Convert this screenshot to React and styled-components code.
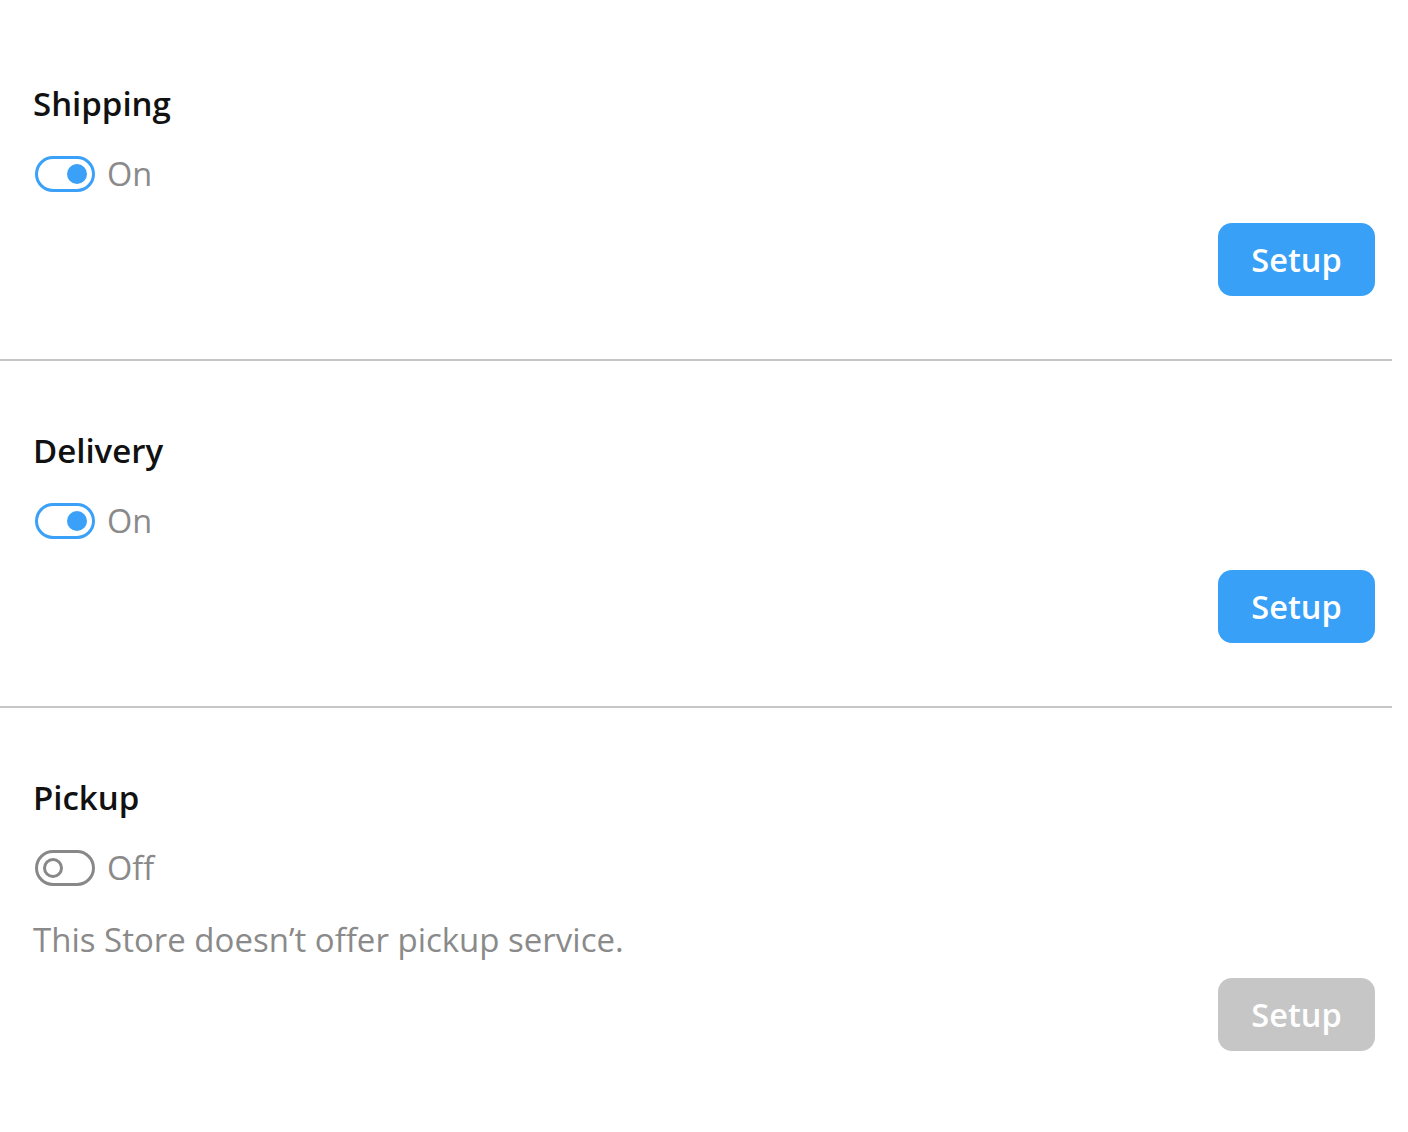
import React, { useState } from 'react';
import styled, { createGlobalStyle } from 'styled-components';

const GlobalStyle = createGlobalStyle`
  body {
    margin: 0;
    background: #ffffff;
    font-family: "Open Sans", "Noto Sans", sans-serif;
  }
`;

const sections = [
  { id: 'shipping', title: 'Shipping', on: true },
  { id: 'delivery', title: 'Delivery', on: true },
  {
    id: 'pickup',
    title: 'Pickup',
    on: false,
    note: 'This Store doesn\u2019t offer pickup service.'
  }
];

const App = () => {
  const [state, setState] = useState(() =>
    sections.reduce((acc, s) => ({ ...acc, [s.id]: s.on }), {})
  );

  return (
    <Page>
      <GlobalStyle />
      {sections.map((s, i) => (
        <Section key={s.id} last={i === sections.length - 1}>
          <Title>{s.title}</Title>
          <ToggleRow
            onClick={() => setState(prev => ({ ...prev, [s.id]: !prev[s.id] }))}
          >
            <Switch on={state[s.id]}>
              <Knob on={state[s.id]} />
            </Switch>
            <ToggleLabel>{state[s.id] ? 'On' : 'Off'}</ToggleLabel>
          </ToggleRow>
          {s.note && <Note>{s.note}</Note>}
          <Actions tight={!!s.note}>
            <SetupButton disabled={!state[s.id]}>Setup</SetupButton>
          </Actions>
        </Section>
      ))}
    </Page>
  );
};

export default App;

const Page = styled.div`
  width: 1392px;
  padding-top: 14px;
`;

const Section = styled.section`
  display: flex;
  flex-direction: column;
  padding: 70px 17px ${({ last }) => (last ? '60px' : '63px')} 33px;
  border-bottom: ${({ last }) => (last ? 'none' : '2px solid #c6c6c6')};
`;

const Title = styled.h2`
  margin: 0;
  font-size: 33px;
  line-height: 40px;
  font-weight: 600;
  color: #111111;
`;

const ToggleRow = styled.div`
  display: flex;
  align-items: center;
  gap: 12px;
  height: 40px;
  margin-top: 30px;
  margin-left: 2px;
  cursor: pointer;
`;

const Switch = styled.div`
  box-sizing: border-box;
  width: 60px;
  height: 36px;
  border-radius: 18px;
  border: 3px solid ${({ on }) => (on ? '#3aa0f8' : '#888888')};
  display: flex;
  align-items: center;
  justify-content: ${({ on }) => (on ? 'flex-end' : 'flex-start')};
  padding: 0 5px;
`;

const Knob = styled.span`
  box-sizing: border-box;
  width: 20px;
  height: 20px;
  border-radius: 50%;
  background: ${({ on }) => (on ? '#3aa0f8' : '#ffffff')};
  border: ${({ on }) => (on ? 'none' : '3px solid #888888')};
`;

const ToggleLabel = styled.span`
  font-size: 32.5px;
  line-height: 40px;
  color: #8a8a8a;
`;

const Note = styled.p`
  margin: 32px 0 0;
  font-size: 33px;
  line-height: 40px;
  color: #8a8a8a;
`;

const Actions = styled.div`
  display: flex;
  justify-content: flex-end;
  margin-top: ${({ tight }) => (tight ? '18px' : '29px')};
`;

const SetupButton = styled.button`
  width: 157px;
  height: 73px;
  border: none;
  border-radius: 14px;
  background: ${({ disabled }) => (disabled ? '#c6c6c6' : '#38a0f7')};
  color: #ffffff;
  font-family: "Open Sans", "Noto Sans", sans-serif;
  font-size: 32.5px;
  font-weight: 600;
  cursor: ${({ disabled }) => (disabled ? 'default' : 'pointer')};
`;
